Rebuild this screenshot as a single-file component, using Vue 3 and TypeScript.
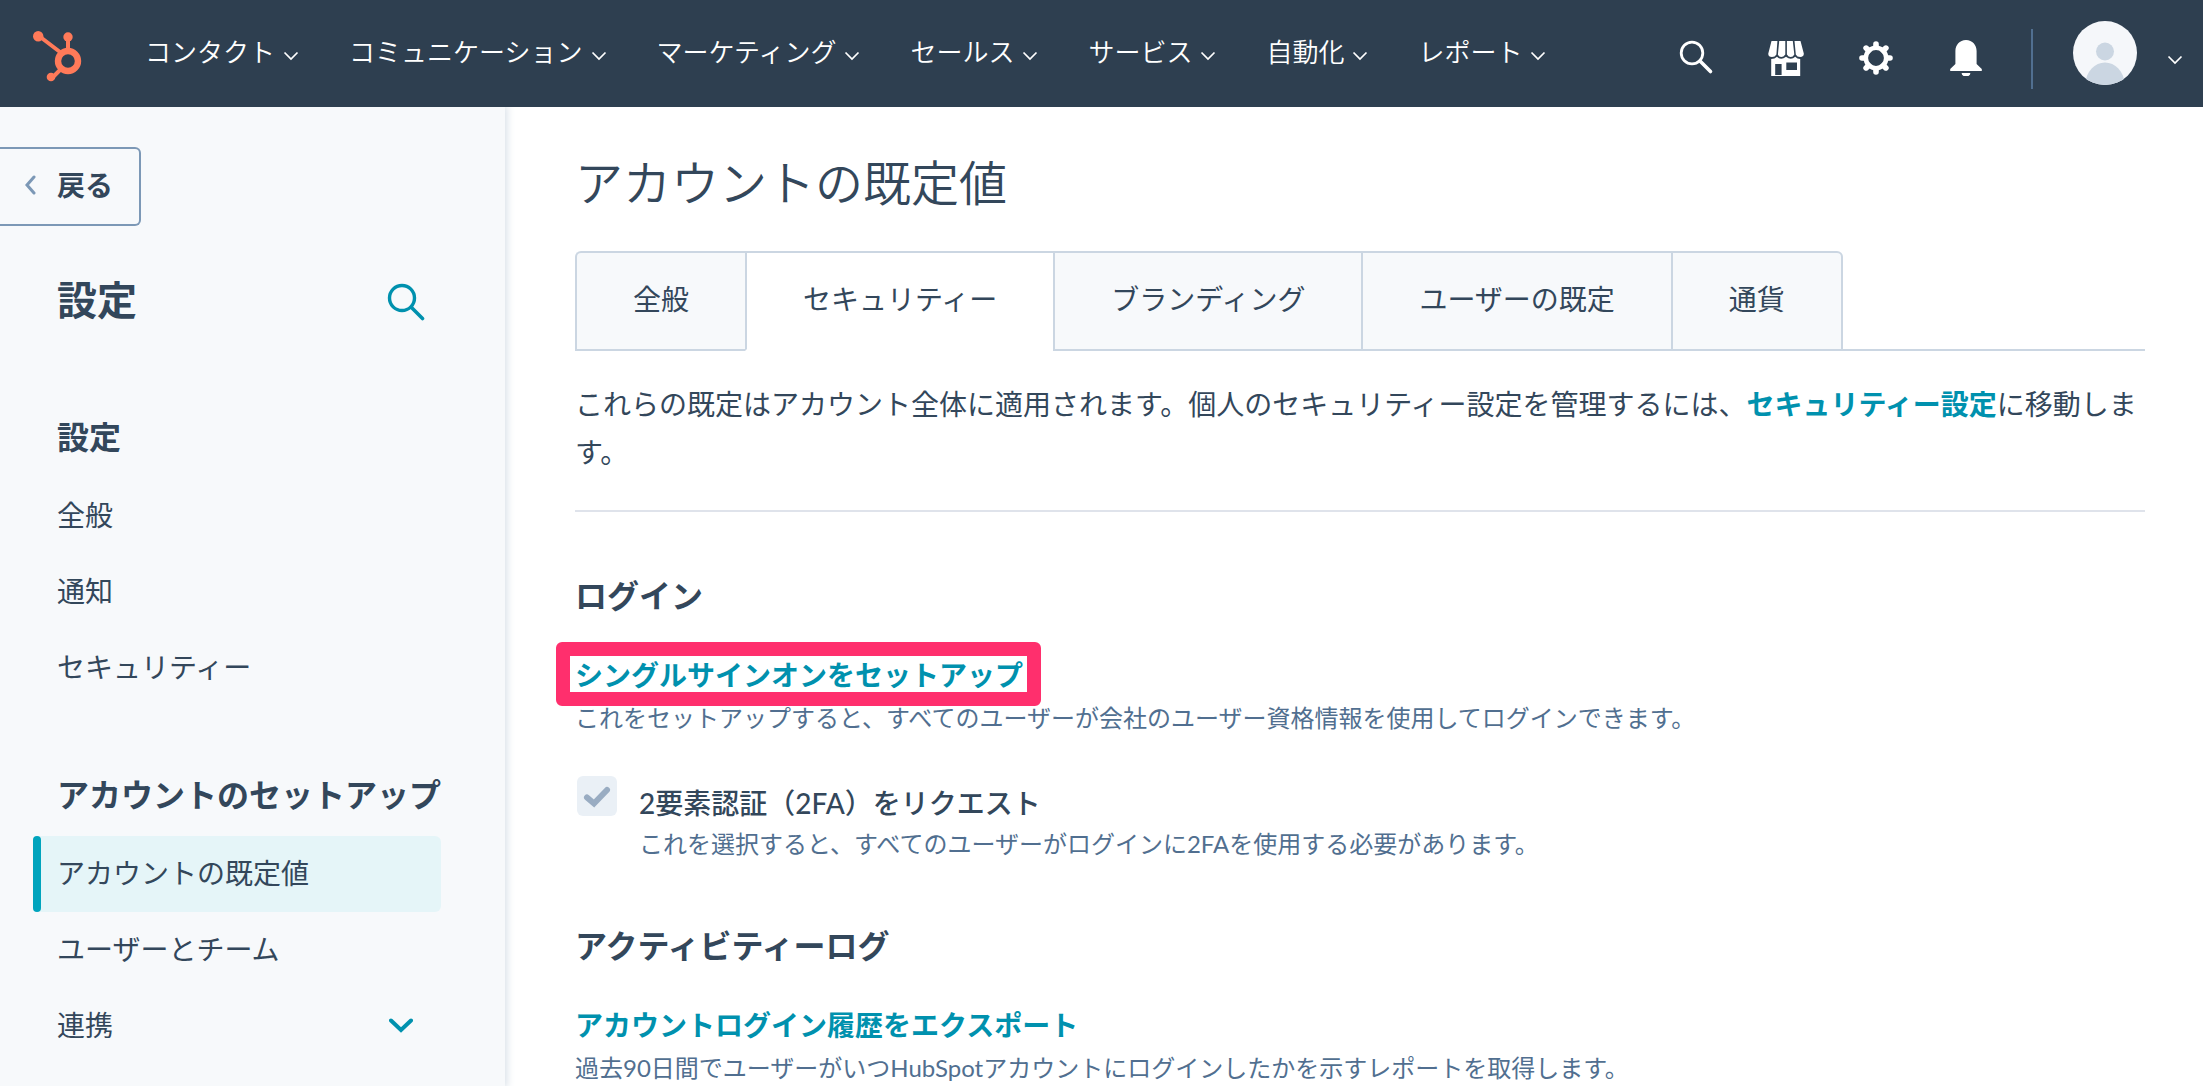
<script setup lang="ts">
import { ref } from 'vue'

interface SideItem {
  label: string
  current?: boolean
  expandable?: boolean
}

interface SideGroup {
  heading: string
  items: SideItem[]
}

const navItems: string[] = [
  'コンタクト',
  'コミュニケーション',
  'マーケティング',
  'セールス',
  'サービス',
  '自動化',
  'レポート',
]

const sideGroups: SideGroup[] = [
  {
    heading: '設定',
    items: [{ label: '全般' }, { label: '通知' }, { label: 'セキュリティー' }],
  },
  {
    heading: 'アカウントのセットアップ',
    items: [
      { label: 'アカウントの既定値', current: true },
      { label: 'ユーザーとチーム' },
      { label: '連携', expandable: true },
    ],
  },
]

const tabs: string[] = ['全般', 'セキュリティー', 'ブランディング', 'ユーザーの既定', '通貨']
const activeTab = ref<string>('セキュリティー')
</script>

<template>
  <div class="page">
    <header class="topbar">
      <a class="logo" href="#" aria-label="HubSpot">
        <svg width="50" height="52" viewBox="0 0 50 52" fill="none" stroke="#ff7a59">
          <circle cx="35" cy="30" r="10" stroke-width="6.4" />
          <path d="M35 18V7M27 21L6 5M28 38L19 47" stroke-width="4" />
          <g fill="#ff7a59" stroke="none">
            <circle cx="5.200" cy="5.200" r="5.200" />
            <circle cx="35" cy="6" r="4.700" />
            <circle cx="18" cy="46" r="4.300" />
          </g>
        </svg>
      </a>
      <nav class="mainnav">
        <button v-for="item in navItems" :key="item" type="button">
          <span>{{ item }}</span>
          <svg class="caret" width="16" height="10" viewBox="0 0 16 10">
            <path d="M1.500 1.500L8 8L14.500 1.500" fill="none" stroke="#fff" stroke-width="1.700" />
          </svg>
        </button>
      </nav>
      <div class="tools">
        <button type="button" aria-label="検索">
          <svg width="36" height="36" viewBox="0 0 36 36" fill="none" stroke="#fff" stroke-linecap="round">
            <circle cx="14" cy="13" r="10.800" stroke-width="2.800" />
            <path d="M22 21L32.500 31.500" stroke-width="3.600" />
          </svg>
        </button>
        <button type="button" aria-label="マーケットプレイス">
          <svg width="36" height="36" viewBox="0 0 36 36" fill="#fff">
            <path d="M3.500 1H9.400L8.400 14.500Q7 17 4 17Q0 17 .3 13.500ZM11.200 1H17.300V14.500Q15.500 17 13.200 17Q11 17 9.900 14.500ZM18.900 1H24.800L26.300 14.500Q25 17 22.700 17Q20.500 17 18.900 14.500ZM26.500 1H32.500L35.800 13.500Q36 17 32.200 17Q29 17 27.800 14.500Z" />
            <path d="M3.200 19Q6.800 19 9 16.800Q13 20.800 18 16.800Q23 20.800 27.200 16.800Q29.200 19 32.200 19V36H3.200ZM7.200 24V35H13.600V24ZM18.300 22.500V30H29V22.500Z" fill-rule="evenodd" />
          </svg>
        </button>
        <button type="button" aria-label="設定">
          <svg width="36" height="36" viewBox="0 0 36 36" fill="none" stroke="#fff">
            <circle cx="18" cy="18" r="10.200" stroke-width="4.600" />
            <path d="M18 4V7M18 29V32M4 18H7M29 18H32M8.100 8.100L10.500 10.500M25.500 25.500L27.900 27.900M27.900 8.100L25.500 10.500M10.500 25.500L8.100 27.900" stroke-width="5.600" stroke-linecap="round" />
          </svg>
        </button>
        <button type="button" aria-label="通知">
          <svg width="36" height="36" viewBox="0 0 36 36" fill="#fff">
            <path d="M18 0C24.500 0 28.600 5 28.600 11V24L33.800 29V31H2.200V29L7.400 24V11C7.400 5 11.500 0 18 0Z" />
            <path d="M13.600 33H22.400A4.400 3.400 0 0 1 13.600 33Z" />
          </svg>
        </button>
      </div>
      <span class="divider"></span>
      <button class="account" type="button" aria-label="アカウント">
        <svg class="avatar" width="64" height="64" viewBox="0 0 64 64">
          <defs>
            <clipPath id="avatar-circle"><circle cx="32" cy="32" r="32" /></clipPath>
          </defs>
          <g clip-path="url(#avatar-circle)">
            <rect width="64" height="64" fill="#f5f7fa" />
            <circle cx="32" cy="30.500" r="9" fill="#cbd6e2" />
            <path d="M12 64C13 50 22 41.500 32 41.500S51 50 52 64Z" fill="#cbd6e2" />
          </g>
        </svg>
        <svg class="account-caret" width="16" height="10" viewBox="0 0 16 10">
          <path d="M1.500 1.500L8 8L14.500 1.500" fill="none" stroke="#fff" stroke-width="1.700" />
        </svg>
      </button>
    </header>

    <div class="body">
      <aside class="sidebar">
        <button class="back" type="button">
          <svg width="12" height="20" viewBox="0 0 12 20">
            <path d="M10 2L3 10L10 18" fill="none" stroke="#7c98b6" stroke-width="3" stroke-linecap="round" />
          </svg>
          <span>戻る</span>
        </button>
        <div class="side-title">
          <h2>設定</h2>
          <button type="button" aria-label="設定を検索">
            <svg width="38" height="38" viewBox="0 0 38 38" fill="none" stroke="#0091ae" stroke-linecap="round">
              <circle cx="15" cy="15" r="12.500" stroke-width="3.400" />
              <path d="M24.500 24.500L35.500 35.500" stroke-width="3.600" />
            </svg>
          </button>
        </div>
        <section v-for="group in sideGroups" :key="group.heading" class="side-group">
          <h3>{{ group.heading }}</h3>
          <ul>
            <li v-for="item in group.items" :key="item.label">
              <a href="#" :class="{ current: item.current }">
                <span>{{ item.label }}</span>
                <svg v-if="item.expandable" width="24" height="15" viewBox="0 0 24 15">
                  <path d="M2 2.500L12 12L22 2.500" fill="none" stroke="#0091ae" stroke-width="4" stroke-linecap="round" />
                </svg>
              </a>
            </li>
          </ul>
        </section>
      </aside>

      <main class="content">
        <h1>アカウントの既定値</h1>
        <div class="tabs" role="tablist">
          <button
            v-for="tab in tabs"
            :key="tab"
            type="button"
            role="tab"
            :aria-selected="tab === activeTab"
            :class="{ active: tab === activeTab }"
            @click="activeTab = tab"
          >{{ tab }}</button>
          <span class="tabs-rest"></span>
        </div>
        <p class="intro">これらの既定はアカウント全体に適用されます。個人のセキュリティー設定を管理するには、<a class="link" href="#">セキュリティー設定</a>に移動します。</p>

        <section class="block">
          <h2>ログイン</h2>
          <div class="action"><a class="link highlighted" href="#">シングルサインオンをセットアップ</a></div>
          <p class="help">これをセットアップすると、すべてのユーザーが会社のユーザー資格情報を使用してログインできます。</p>
          <div class="check-row">
            <span class="checkbox">
              <input id="require-2fa" type="checkbox" checked disabled aria-describedby="require-2fa-help" />
              <svg width="40" height="40" viewBox="0 0 40 40">
                <path d="M10 21.500L17 27.500L30 14" fill="none" stroke="#99acc2" stroke-width="6" stroke-linecap="round" />
              </svg>
            </span>
            <div>
              <label for="require-2fa">2要素認証（2FA）をリクエスト</label>
              <p id="require-2fa-help" class="help">これを選択すると、すべてのユーザーがログインに2FAを使用する必要があります。</p>
            </div>
          </div>
        </section>

        <section class="block">
          <h2>アクティビティーログ</h2>
          <div class="action"><a class="link" href="#">アカウントログイン履歴をエクスポート</a></div>
          <p class="help">過去90日間でユーザーがいつHubSpotアカウントにログインしたかを示すレポートを取得します。</p>
        </section>
      </main>
    </div>
  </div>
</template>

<style>
body {
  margin: 0;
}
</style>

<style scoped>
.page {
  min-height: 100vh;
  display: flex;
  flex-direction: column;
  background: #fff;
  color: #33475b;
  font-family: Lato, "Noto Sans CJK JP", sans-serif;
  font-size: 28px;
  line-height: 48px;
}

h1,
h2,
h3,
p,
ul {
  margin: 0;
  padding: 0;
}

ul {
  list-style: none;
}

svg {
  display: block;
  flex: none;
}

button {
  margin: 0;
  padding: 0;
  border: 0;
  background: none;
  color: inherit;
  font: inherit;
  cursor: pointer;
}

a {
  color: inherit;
  text-decoration: none;
}

/* Top bar */
.topbar {
  display: flex;
  align-items: center;
  height: 107px;
  padding: 0 20px 0 33px;
  background: #2e3f50;
  color: #fff;
}

.logo {
  margin: 6px 62px 0 0;
}

.mainnav {
  display: flex;
  gap: 50px;
  padding-bottom: 4px;
  font-size: 26px;
}

.mainnav button {
  display: flex;
  align-items: center;
  gap: 8px;
  font-weight: 350;
  white-space: nowrap;
}

.caret {
  margin-top: 9px;
}

.tools {
  display: flex;
  gap: 54px;
  margin: 9px 47px 0 auto;
}

.divider {
  width: 2px;
  height: 60px;
  margin-top: 11px;
  background: #516f90;
}

.account {
  display: flex;
  align-items: center;
  gap: 30px;
  margin-left: 40px;
  padding-bottom: 2px;
}

.account-caret {
  margin-top: 15px;
}

/* Sidebar */
.body {
  display: flex;
  flex: 1;
}

.sidebar {
  position: relative;
  flex: none;
  box-sizing: border-box;
  width: 505px;
  padding: 40px 64px 0 0;
  background: #f7f9fb;
  box-shadow: 0 0 8px 2px #d8e0e8;
  clip-path: inset(0 -12px 0 0);
}

.back {
  display: flex;
  align-items: center;
  gap: 21px;
  box-sizing: border-box;
  height: 79px;
  padding: 0 26px 4px 24px;
  border: 2px solid #7c98b6;
  border-left: 0;
  border-radius: 0 6px 6px 0;
  font-weight: 600;
}

.side-title {
  display: flex;
  align-items: center;
  justify-content: space-between;
  margin: 50px 16px 90px 57px;
}

.side-title h2 {
  font-size: 40px;
  font-weight: 600;
}

.side-title button {
  padding-top: 4px;
}

.side-group {
  margin-bottom: 66px;
}

.side-group:last-child {
  margin-bottom: 0;
}

.side-group h3 {
  margin: 0 0 18px 57px;
  font-size: 32px;
  font-weight: 600;
  line-height: 46px;
  white-space: nowrap;
}

.side-group a {
  display: flex;
  align-items: center;
  justify-content: space-between;
  position: relative;
  box-sizing: border-box;
  height: 76px;
  margin-left: 33px;
  padding: 0 28px 2px 24px;
  border-radius: 6px;
}

.side-group a.current {
  background: #e5f5f8;
}

.side-group a.current::before {
  content: "";
  position: absolute;
  inset: 0 auto 0 0;
  width: 8px;
  border-radius: 4px;
  background: #00a4bd;
}

/* Content */
.content {
  flex: 1;
  min-width: 0;
  padding: 44px 58px 0 70px;
}

h1 {
  font-size: 48px;
  font-weight: 350;
  line-height: 64px;
}

.tabs {
  display: flex;
  margin: 36px 0 29px;
}

.tabs button {
  box-sizing: border-box;
  height: 100px;
  padding: 0 56px 4px;
  border: solid #cbd6e2;
  border-width: 2px 0 2px 2px;
  background: #f7f9fb;
  white-space: nowrap;
}

.tabs button:first-child {
  border-top-left-radius: 6px;
}

.tabs button:nth-last-child(2) {
  border-right-width: 2px;
  border-top-right-radius: 6px;
}

.tabs button.active {
  border-bottom-color: transparent;
  background: transparent;
}

.tabs-rest {
  flex: 1;
  border-bottom: 2px solid #cbd6e2;
}

.intro {
  padding-bottom: 34px;
  border-bottom: 2px solid #dfe3eb;
}

.link {
  color: #0091ae;
  font-weight: 600;
}

.block {
  padding-top: 60px;
}

.block h2 {
  margin-bottom: 31px;
  font-size: 32px;
  font-weight: 600;
}

.action {
  height: 49px;
}

.highlighted {
  display: inline-block;
  position: relative;
}

/* Callout frame round the highlighted link */
.highlighted::before {
  content: "";
  position: absolute;
  inset: -9px -18px -7px -19px;
  border: 14px solid #ff2f6d;
  border-radius: 6px;
}

.help {
  color: #516f90;
  font-size: 24px;
  line-height: 36px;
}

.check-row {
  display: flex;
  gap: 22px;
  margin-top: 40px;
  padding-left: 2px;
}

.checkbox {
  display: grid;
  flex: none;
  height: 40px;
}

.checkbox > * {
  grid-area: 1 / 1;
}

.checkbox input {
  appearance: none;
  width: 40px;
  height: 40px;
  margin: 0;
  border-radius: 6px;
  background: #eaf0f6;
}

.checkbox svg {
  position: relative;
  pointer-events: none;
}

.check-row label {
  display: block;
  padding-top: 4px;
  font-weight: 500;
  line-height: 46px;
}
</style>
